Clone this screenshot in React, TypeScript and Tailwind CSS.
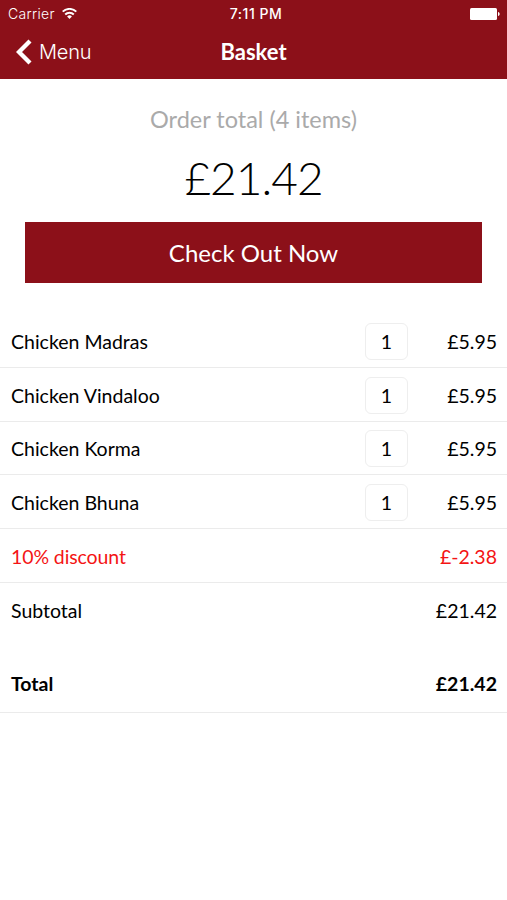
type BasketItem = {
  name: string;
  quantity: number;
  price: string;
};

const ITEMS: BasketItem[] = [
  { name: 'Chicken Madras', quantity: 1, price: '£5.95' },
  { name: 'Chicken Vindaloo', quantity: 1, price: '£5.95' },
  { name: 'Chicken Korma', quantity: 1, price: '£5.95' },
  { name: 'Chicken Bhuna', quantity: 1, price: '£5.95' },
];

function StatusBar() {
  return (
    <div className="grid h-[27px] grid-cols-3 items-center pl-2 pr-[7px] font-['Inter',sans-serif]">
      <div className="flex items-center gap-1.5">
        <span className="w-[48px] text-[14px] font-light tracking-[0.3px]">Carrier</span>
        <svg width="15" height="11" viewBox="0 0 15 11" fill="none" stroke="currentColor" strokeWidth="1.9">
          <path d="M.7 3.7a9.6 9.6 0 0 1 13.6 0" />
          <path d="M3.2 6.5a6 6 0 0 1 8.6 0" />
          <path d="M7.5 11 5.1 8.5a3.4 3.4 0 0 1 4.8 0Z" fill="currentColor" stroke="none" />
        </svg>
      </div>
      <span className="pl-1 text-center text-[14px] font-medium tracking-[0.5px]">7:11 PM</span>
      <svg className="justify-self-end" width="30" height="12" viewBox="0 0 30 12" fill="currentColor">
        <rect width="27" height="12" rx="1.5" />
        <path d="M28 4c2.2 .5 2.2 3.500 0 4Z" />
      </svg>
    </div>
  );
}

function NavBar() {
  return (
    <div className="relative flex h-[52px] items-center justify-center pb-[3px]">
      <button className="absolute left-4 flex items-center gap-[7px] pt-px font-['Inter',sans-serif] text-[20px] font-light tracking-[-0.2px]">
        <svg width="16" height="26" viewBox="0 0 16 26" fill="none" stroke="currentColor" strokeWidth="4.3">
          <path d="M14 2 3 13l11 11" />
        </svg>
        Menu
      </button>
      <h1 className="text-[22px] font-bold">Basket</h1>
    </div>
  );
}

function ItemRow({ name, quantity, price }: BasketItem) {
  return (
    <li className="flex h-[53.75px] items-center border-b border-[#ebebeb] pl-[11px] pr-2.5 pt-0.5">
      <span className="flex-1">{name}</span>
      <span className="flex h-[37px] w-[43px] items-center justify-center rounded-md border border-[#eeeeee]">
        {quantity}
      </span>
      <span className="w-[89px] text-right">{price}</span>
    </li>
  );
}

export default function App() {
  return (
    <div className="h-[900px] w-[507px] overflow-hidden bg-white font-['Lato',sans-serif] text-[19.5px] text-black">
      <header className="h-[79px] bg-[#8c1019] text-white">
        <StatusBar />
        <NavBar />
      </header>
      <section className="flex h-[235px] flex-col items-center px-[25px] pt-[25px]">
        <p className="text-[23.5px] leading-[30px] text-[#aaaaaa]">Order total (4 items)</p>
        <p className="mt-3.5 text-[46px] font-light leading-[60px] tracking-[-1px]">£21.42</p>
        <button className="mt-3.5 h-[61px] w-full bg-[#8c1019] text-2xl text-white">Check Out Now</button>
      </section>
      <ul>
        {ITEMS.map((item) => (
          <ItemRow key={item.name} {...item} />
        ))}
      </ul>
      <div className="flex h-[53.5px] items-center justify-between border-b border-[#ebebeb] pl-[11px] pr-2.5 pt-0.5 text-[#f41414]">
        <span className="tracking-[-0.1px]">10% discount</span>
        <span>£-2.38</span>
      </div>
      <div className="flex h-[57.5px] items-center justify-between pl-[11px] pr-2.5">
        <span className="-mt-0.5">Subtotal</span>
        <span className="-mt-0.5">£21.42</span>
      </div>
      <div className="flex h-[73px] items-center justify-between border-b border-[#ebebeb] pl-[11px] pr-2.5 pt-4 font-bold">
        <span>Total</span>
        <span>£21.42</span>
      </div>
    </div>
  );
}
